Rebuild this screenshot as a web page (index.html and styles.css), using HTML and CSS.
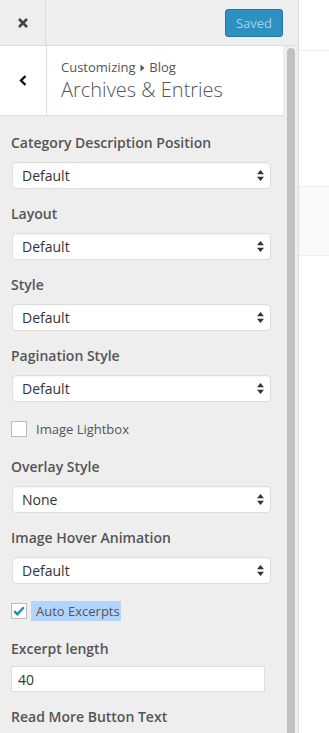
FILE: index.html
```html
<!DOCTYPE html>
<html lang="en">
<head>
    <meta charset="UTF-8">
    <meta name="viewport" content="width=device-width, initial-scale=1.0">
    <title>Customize: Archives &amp; Entries</title>
    <link rel="stylesheet" href="styles.css">
</head>
<body>
    <div class="app">
        <div class="sidebar">
            <div class="topbar">
                <div class="close-btn">
                    <svg width="10" height="10" viewBox="0 0 10 10"><path d="M1 1L9 9M9 1L1 9" stroke="#444" stroke-width="2.6" fill="none"/></svg>
                </div>
                <button class="save-btn" type="button">Saved</button>
            </div>
            <div class="scroller">
                <div class="panel">
                    <div class="section-head">
                        <div class="back-btn">
                            <svg width="8" height="11" viewBox="0 0 8 11"><path d="M6.5 1L2 5.5L6.5 10" stroke="#111" stroke-width="2.4" fill="none"/></svg>
                        </div>
                        <div class="section-title">
                            <span class="crumb">Customizing <svg class="crumb-arrow" width="5" height="8" viewBox="0 0 5 8"><path d="M0.5 0.5L4.5 4L0.5 7.5Z" fill="#555"/></svg> Blog</span>
                            <h3>Archives &amp; Entries</h3>
                        </div>
                    </div>
                    <ul class="controls">
                        <li class="control">
                            <span class="control-label">Category Description Position</span>
                            <div class="select"><span>Default</span><svg width="7" height="11" viewBox="0 0 7 11"><path d="M3.5 0L7 4.3H0Z M3.5 11L0 6.7H7Z" fill="#333"/></svg></div>
                        </li>
                        <li class="control">
                            <span class="control-label">Layout</span>
                            <div class="select"><span>Default</span><svg width="7" height="11" viewBox="0 0 7 11"><path d="M3.5 0L7 4.3H0Z M3.5 11L0 6.7H7Z" fill="#333"/></svg></div>
                        </li>
                        <li class="control">
                            <span class="control-label">Style</span>
                            <div class="select"><span>Default</span><svg width="7" height="11" viewBox="0 0 7 11"><path d="M3.5 0L7 4.3H0Z M3.5 11L0 6.7H7Z" fill="#333"/></svg></div>
                        </li>
                        <li class="control">
                            <span class="control-label">Pagination Style</span>
                            <div class="select"><span>Default</span><svg width="7" height="11" viewBox="0 0 7 11"><path d="M3.5 0L7 4.3H0Z M3.5 11L0 6.7H7Z" fill="#333"/></svg></div>
                        </li>
                        <li class="control">
                            <label class="check-row"><span class="checkbox"></span><span class="check-text">Image Lightbox</span></label>
                        </li>
                        <li class="control">
                            <span class="control-label">Overlay Style</span>
                            <div class="select"><span>None</span><svg width="7" height="11" viewBox="0 0 7 11"><path d="M3.5 0L7 4.3H0Z M3.5 11L0 6.7H7Z" fill="#333"/></svg></div>
                        </li>
                        <li class="control">
                            <span class="control-label">Image Hover Animation</span>
                            <div class="select"><span>Default</span><svg width="7" height="11" viewBox="0 0 7 11"><path d="M3.5 0L7 4.3H0Z M3.5 11L0 6.7H7Z" fill="#333"/></svg></div>
                        </li>
                        <li class="control">
                            <label class="check-row">
                                <span class="checkbox">
                                    <svg width="12" height="10" viewBox="0 0 12 10"><path d="M1.2 5.2L4.4 8.2L10.8 1.2" stroke="#1e8cbe" stroke-width="2.4" fill="none"/></svg>
                                </span>
                                <span class="check-text selected">Auto Excerpts</span>
                            </label>
                        </li>
                        <li class="control control-text">
                            <span class="control-label">Excerpt length</span>
                            <input class="text-input" type="text" value="40">
                        </li>
                        <li class="control control-text">
                            <span class="control-label">Read More Button Text</span>
                            <input class="text-input" type="text" value="Read More">
                        </li>
                    </ul>
                </div>
                <div class="scrollbar"><div class="thumb"></div></div>
            </div>
        </div>
        <div class="preview">
            <div class="preview-top"></div>
            <div class="preview-band"></div>
        </div>
    </div>
</body>
</html>
```

FILE: styles.css
```css
html, body {
    margin: 0;
    padding: 0;
    height: 733px;
    overflow: hidden;
    background: #fff;
    font-family: "Open Sans", "Liberation Sans", sans-serif;
    color: #555;
}

.app {
    display: flex;
    height: 733px;
}

.sidebar {
    width: 298px;
    flex: none;
    border-right: 1px solid #ddd;
    background: #eee;
    display: flex;
    flex-direction: column;
}

/* top bar */
.topbar {
    height: 45px;
    border-bottom: 1px solid #ddd;
    display: flex;
    align-items: center;
    justify-content: space-between;
    padding-right: 15px;
}
.close-btn {
    width: 45px;
    height: 45px;
    border-right: 1px solid #ddd;
    display: flex;
    align-items: center;
    justify-content: center;
}
.save-btn {
    width: 58px;
    height: 28px;
    padding: 0;
    margin-top: 1px;
    background: #2e8fc1;
    border: 1px solid #1f78a5;
    border-radius: 3px;
    color: #a3d3ea;
    font-family: "Open Sans", "Liberation Sans", sans-serif;
    font-size: 13px;
}

/* scroll area */
.scroller {
    flex: 1;
    display: flex;
    min-height: 0;
}
.panel {
    width: 283px;
    flex: none;
}
.scrollbar {
    flex: 1;
    padding: 2px 3px 0 4px;
}
.thumb {
    width: 8px;
    height: 700px;
    border-radius: 4px;
    background: #c1c1c1;
}

/* section header */
.section-head {
    height: 69px;
    background: #fff;
    border-bottom: 1px solid #ddd;
    display: flex;
}
.back-btn {
    width: 46px;
    border-right: 1px solid #ddd;
    display: flex;
    align-items: center;
    justify-content: center;
}
.section-title {
    padding: 12px 0 0 14px;
}
.crumb {
    display: block;
    font-size: 13px;
    line-height: 18px;
    color: #555;
}
.crumb-arrow {
    margin: 0 1px;
}
.section-title h3 {
    margin: 0;
    font-size: 20px;
    font-weight: 300;
    line-height: 28px;
    color: #555;
}

/* controls */
.controls {
    list-style: none;
    margin: 0;
    padding: 17px 12px 0 11px;
}
.control {
    margin-bottom: 15px;
}
.control-label {
    display: block;
    font-size: 14px;
    font-weight: 600;
    line-height: 20px;
    margin-bottom: 9px;
    color: #555;
}
.select {
    width: 259px;
    height: 27px;
    margin-left: 1px;
    background: #fff;
    border: 1px solid #ddd;
    border-radius: 4px;
    box-shadow: inset 0 1px 2px rgba(0, 0, 0, 0.04);
    display: flex;
    align-items: center;
    justify-content: space-between;
    padding: 0 6px 0 9px;
    box-sizing: border-box;
    font-size: 14px;
    color: #333;
}

.check-row {
    display: flex;
    align-items: center;
    height: 25px;
}
.checkbox {
    width: 14px;
    height: 14px;
    border: 1px solid #bbb;
    background: #fff;
    display: flex;
    align-items: center;
    justify-content: center;
    margin-right: 4px;
    margin-top: -1px;
}
.check-text {
    font-size: 13px;
    line-height: 20px;
    padding: 0 1px 0 5px;
    margin-top: -1px;
    color: #555;
}
.check-text.selected {
    background: #b3d4fc;
}

.control-text .control-label {
    margin-bottom: 7px;
}
.text-input {
    width: 254px;
    height: 26px;
    box-sizing: border-box;
    border: 1px solid #ddd;
    background: #fff;
    margin: 0;
    padding: 0 6px;
    font-family: "Open Sans", "Liberation Sans", sans-serif;
    font-size: 14px;
    color: #333;
}

/* preview */
.preview {
    flex: 1;
    background: #fff;
}
.preview-top {
    height: 50px;
    border-bottom: 1px solid #eee;
}
.preview-band {
    margin-top: 135px;
    height: 68px;
    background: #f9f9f9;
    border-top: 1px solid #eee;
    border-bottom: 1px solid #eee;
}
```
